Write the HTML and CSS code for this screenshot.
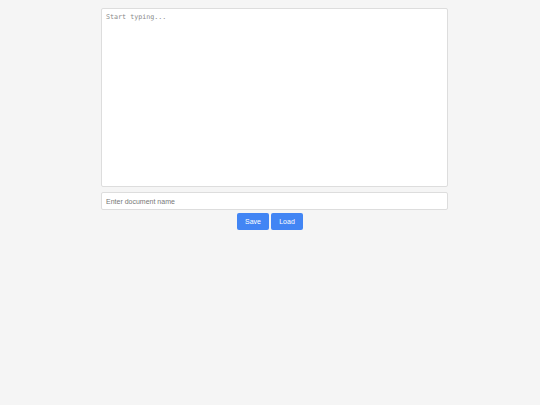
FILE: index.html
```html
<!DOCTYPE html>
<html>
<head>
<meta charset="utf-8">
<link rel="stylesheet" href="styles.css">
</head>
<body>
<div class="editor">
  <textarea class="text" placeholder="Start typing..."></textarea>
  <input class="name" type="text" placeholder="Enter document name">
  <div class="actions">
    <button class="btn">Save</button>
    <button class="btn">Load</button>
  </div>
</div>
</body>
</html>
```

FILE: styles.css
```css
html, body {
  margin: 0;
  padding: 0;
  background: #f5f5f5;
}
body {
  padding-top: 8px;
}
.editor {
  width: 338px;
  margin: 0 auto;
}
.text {
  display: block;
  box-sizing: border-box;
  width: 347px;
  height: 179px;
  margin: 0 0 5px 0;
  padding: 4px 4px;
  border: 1px solid #dddddd;
  border-radius: 2px;
  background: #ffffff;
  font-family: "DejaVu Sans Mono", monospace;
  font-size: 6.7px;
  resize: none;
  outline: none;
}
.text::placeholder {
  color: #8a8a8a;
}
.name {
  display: block;
  box-sizing: border-box;
  width: 347px;
  height: 18px;
  margin: 0 0 3px 0;
  padding: 0 4px;
  border: 1px solid #dddddd;
  border-radius: 2px;
  background: #ffffff;
  font-family: "Liberation Sans", Arial, sans-serif;
  font-size: 7px;
  outline: none;
}
.name::placeholder {
  color: #777777;
}
.actions {
  display: flex;
  justify-content: center;
  gap: 2px;
}
.btn {
  box-sizing: border-box;
  width: 32px;
  height: 17px;
  padding: 0;
  border: none;
  border-radius: 2px;
  background: #4285f4;
  color: #ffffff;
  font-family: "Liberation Sans", Arial, sans-serif;
  font-size: 7px;
}
```
